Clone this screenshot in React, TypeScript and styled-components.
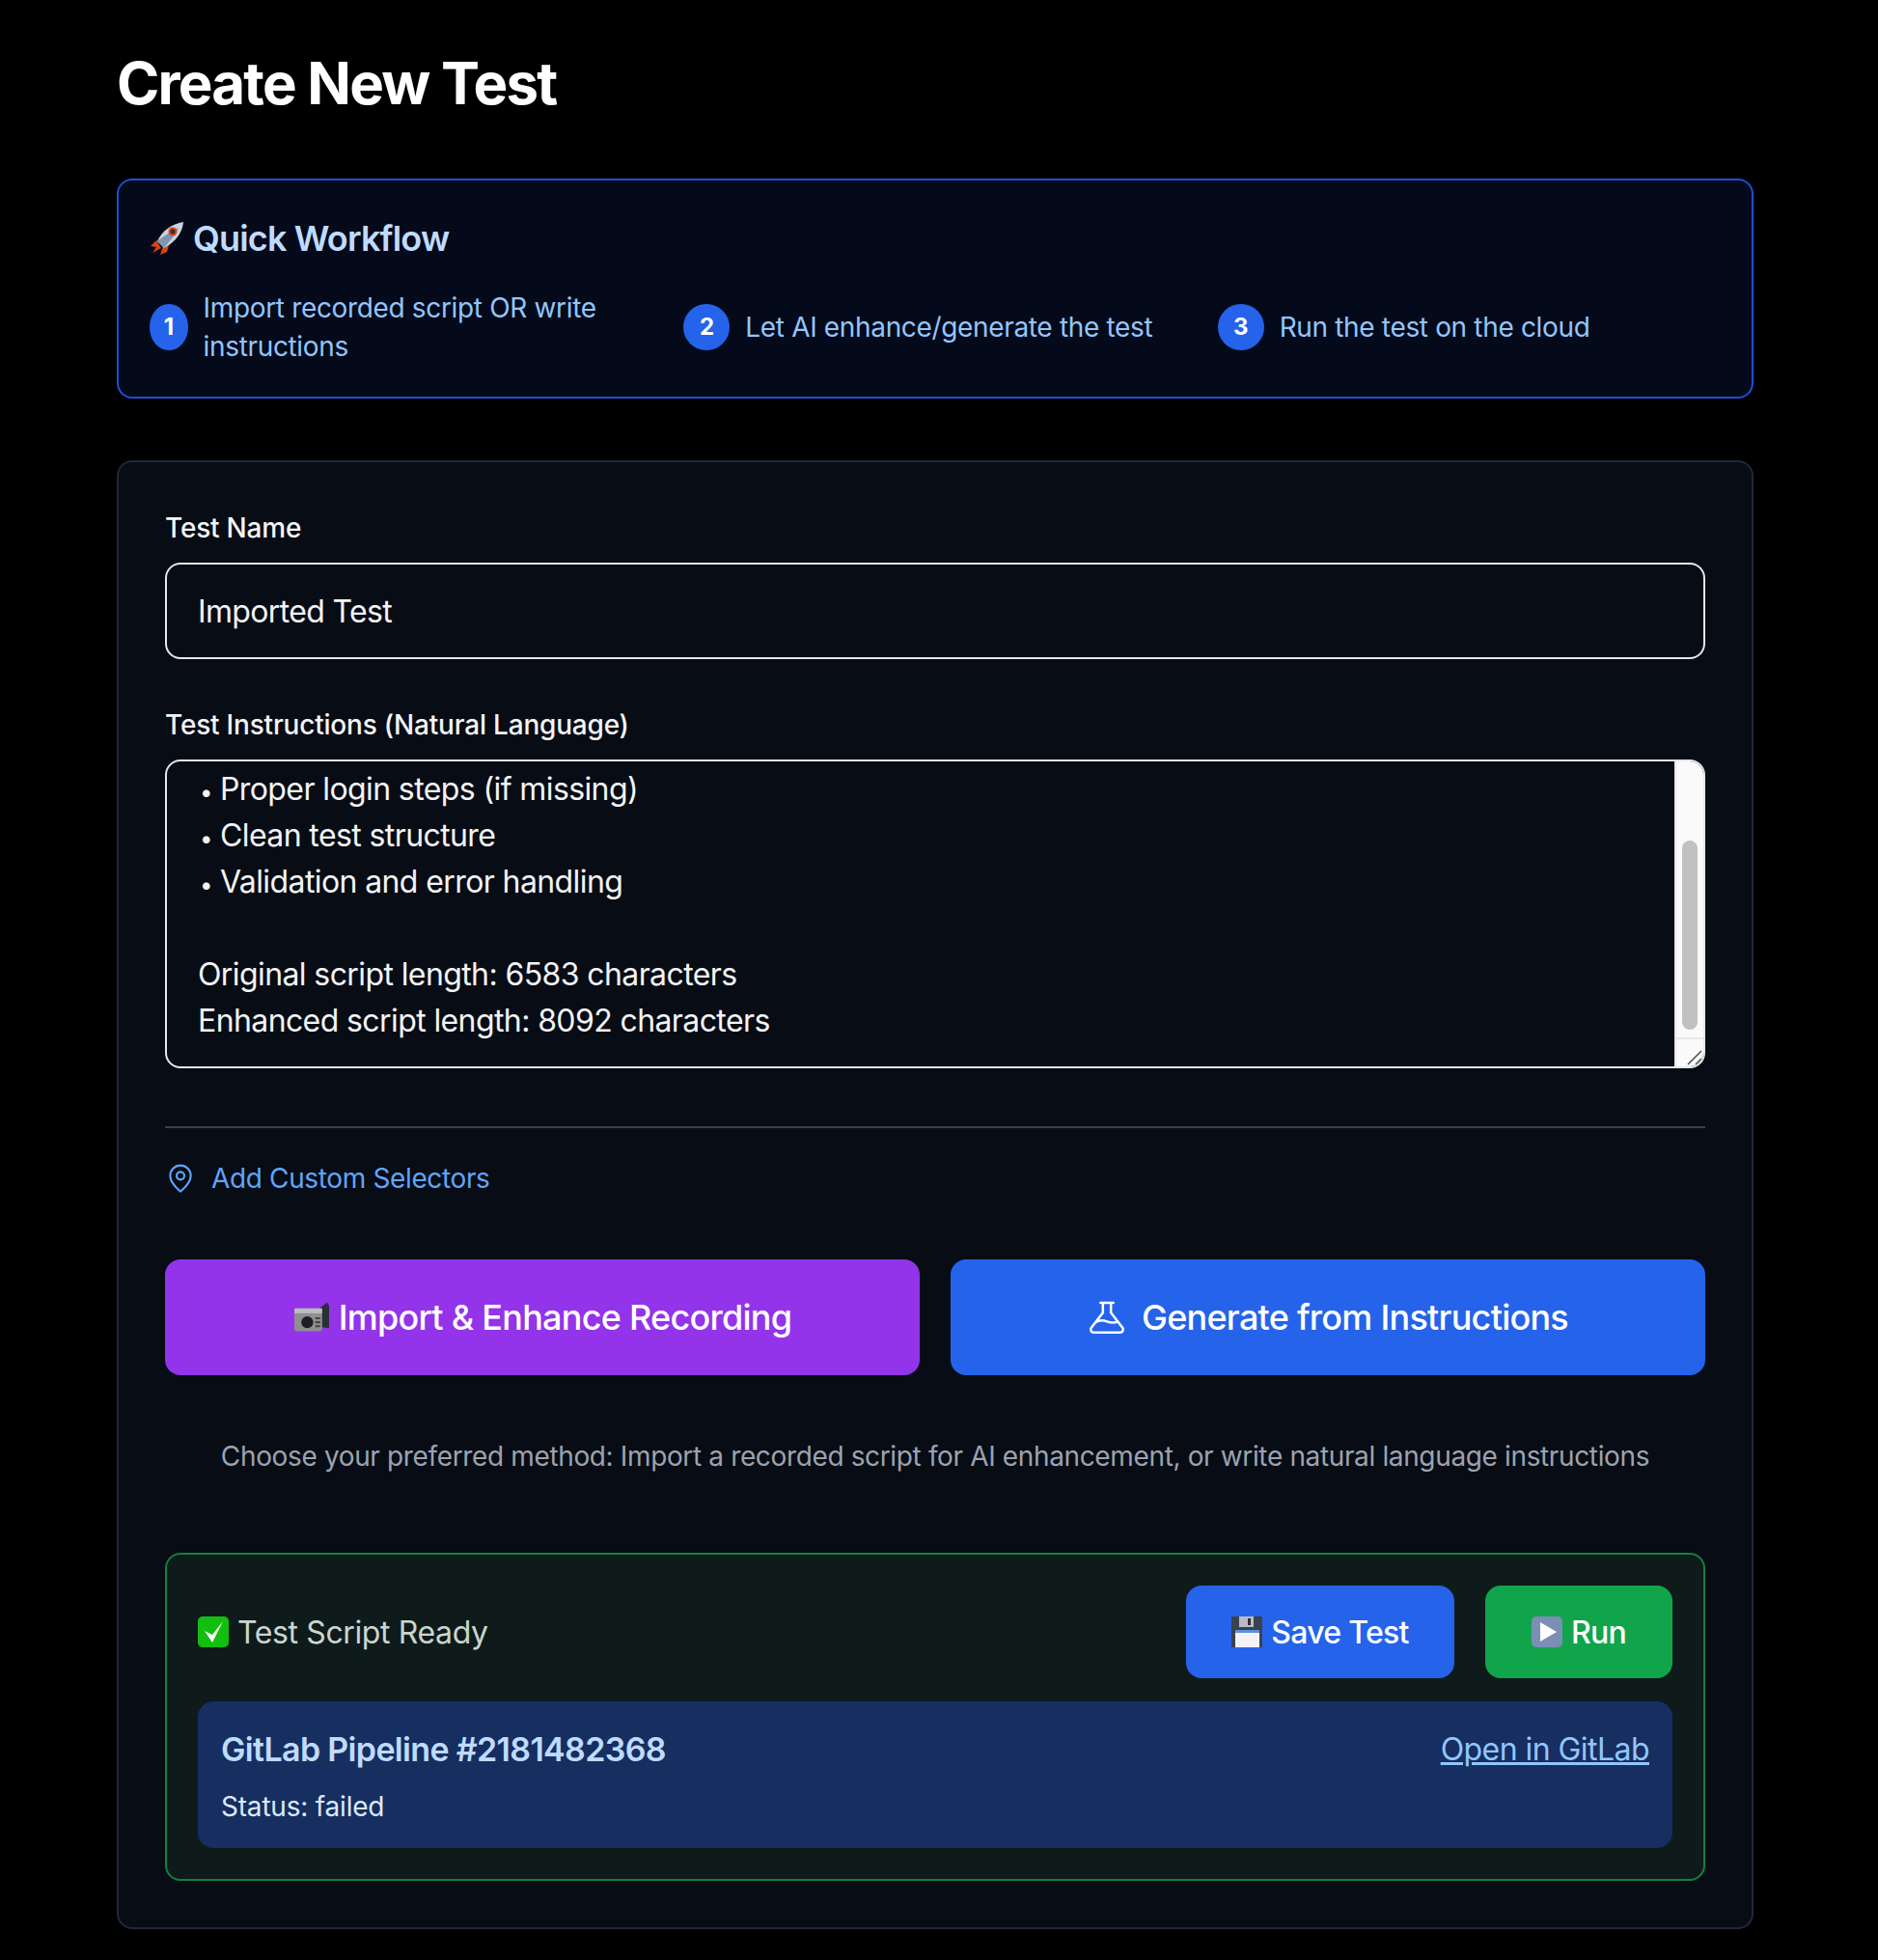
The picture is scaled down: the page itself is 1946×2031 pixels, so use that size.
import styled, { createGlobalStyle } from "styled-components";
import { MapPin } from "lucide-react";

const GlobalStyle = createGlobalStyle`
  html, body {
    margin: 0;
    background: #000;
    color: #fff;
    font-family: "Inter", "Liberation Sans", sans-serif;
  }
  * {
    box-sizing: border-box;
  }
`;

const Page = styled.main`
  width: 1946px;
  min-height: 2031px;
  padding: 50px 129px 33px 121px;
`;

const Title = styled.h1`
  margin: 0 0 63px;
  font-size: 60px;
  line-height: 72px;
  font-weight: 700;
  letter-spacing: -1.8px;
  color: #fff;
`;

const WorkflowCard = styled.section`
  border: 2px solid #1d4ed8;
  border-radius: 16px;
  background: #040a1a;
  padding: 32px;
  margin-bottom: 64px;
`;

const WorkflowTitle = styled.h2`
  display: flex;
  align-items: center;
  gap: 9px;
  margin: 0 0 24px;
  font-size: 36px;
  line-height: 56px;
  font-weight: 600;
  letter-spacing: -0.84px;
  color: #bfdbfe;
`;

const Steps = styled.div`
  display: grid;
  grid-template-columns: repeat(3, 1fr);
  gap: 32px;
`;

const Step = styled.div`
  display: flex;
  align-items: center;
  gap: 16px;
  font-size: 28px;
  line-height: 40px;
  letter-spacing: -0.34px;
  color: #93c5fd;
`;

const StepNumber = styled.span`
  display: flex;
  align-items: center;
  justify-content: center;
  width: 48px;
  height: 48px;
  border-radius: 50%;
  background: #2563eb;
  color: #fff;
  font-size: 24px;
  font-weight: 700;
`;

const FormCard = styled.section`
  border: 2px solid #1f2937;
  border-radius: 16px;
  background: #070c15;
  padding: 48px;
`;

const Label = styled.label`
  display: block;
  margin-bottom: 16px;
  font-size: 28px;
  line-height: 40px;
  font-weight: 500;
  letter-spacing: -0.2px;
  color: #f3f4f6;
`;

const NameInput = styled.input`
  display: block;
  width: 100%;
  height: 100px;
  margin-bottom: 48px;
  padding: 0 32px;
  border: 2px solid #e5e7eb;
  border-radius: 16px;
  background: #070c15;
  color: #f3f4f6;
  font: 400 32px "Inter", sans-serif;
  letter-spacing: -0.65px;
  outline: none;
`;

const TextBox = styled.div`
  position: relative;
  height: 320px;
  padding: 5px 32px 0;
  border: 2px solid #e5e7eb;
  border-radius: 16px;
  background: #070c15;
  overflow: hidden;
  font-size: 32px;
  line-height: 48px;
  letter-spacing: -0.6px;
  color: #f3f4f6;
`;

const TextLine = styled.div`
  height: 48px;
  white-space: pre;
`;

const Bullet = styled.span`
  display: inline-block;
  width: 23px;
  padding-left: 2px;
  font-size: 24px;
  line-height: 24px;
`;

const ScrollTrack = styled.div`
  position: absolute;
  top: 0;
  right: 0;
  bottom: 0;
  width: 30px;
  background: #fafafa;
  border-left: 2px solid #e8e8e8;
`;

const ScrollThumb = styled.div`
  position: absolute;
  top: 82px;
  left: 6px;
  width: 16px;
  height: 196px;
  border-radius: 8px;
  background: #c1c1c1;
`;

const ResizeCorner = styled.div`
  position: absolute;
  left: 0;
  right: 0;
  bottom: 0;
  height: 30px;
  border-top: 2px solid #e8e8e8;
`;

const ResizeGrip = styled.svg`
  position: absolute;
  right: 0;
  bottom: 0;
`;

const Divider = styled.hr`
  margin: 60px 0 0;
  border: 0;
  border-top: 2px solid #374151;
`;

const SelectorsToggle = styled.button`
  display: flex;
  align-items: center;
  gap: 16px;
  margin: 32px 0 64px;
  padding: 0;
  height: 40px;
  border: 0;
  background: none;
  color: #60a5fa;
  font: 400 28px/40px "Inter", sans-serif;
  letter-spacing: -0.36px;
`;

const ActionGrid = styled.div`
  display: grid;
  grid-template-columns: 1fr 1fr;
  gap: 32px;
`;

const ActionButton = styled.button<{ $bg: string }>`
  display: flex;
  align-items: center;
  justify-content: center;
  height: 120px;
  padding: 0;
  border: 0;
  border-radius: 16px;
  background: ${p => p.$bg};
  color: #fff;
  font: 500 36px "Inter", sans-serif;
  letter-spacing: -0.75px;
`;

const Hint = styled.p`
  margin: 64px 0 80px;
  text-align: center;
  font-size: 28px;
  line-height: 40px;
  letter-spacing: -0.36px;
  color: #9ca3af;
`;

const ResultCard = styled.section`
  border: 2px solid #15803d;
  border-radius: 16px;
  background: #0f1a1a;
  padding: 32px;
`;

const ResultHeader = styled.div`
  display: flex;
  align-items: center;
  justify-content: space-between;
  margin-bottom: 24px;
`;

const ResultStatus = styled.div`
  display: flex;
  align-items: center;
  gap: 9px;
  font-size: 32px;
  font-weight: 400;
  letter-spacing: -0.38px;
  color: #c9d6cf;
`;

const ResultActions = styled.div`
  display: flex;
  gap: 32px;
`;

const SmallButton = styled.button<{ $bg: string; $width: number }>`
  display: flex;
  align-items: center;
  justify-content: center;
  gap: 9px;
  width: ${p => p.$width}px;
  height: 96px;
  border: 0;
  border-radius: 16px;
  background: ${p => p.$bg};
  color: #fff;
  font: 500 32px "Inter", sans-serif;
  letter-spacing: -0.7px;
`;

const PipelineCard = styled.div`
  height: 152px;
  padding: 26px 24px 0;
  border-radius: 16px;
  background: #162e60;
`;

const PipelineRow = styled.div`
  display: flex;
  align-items: center;
  justify-content: space-between;
  margin-bottom: 15px;
`;

const PipelineName = styled.span`
  font-size: 34px;
  line-height: 48px;
  font-weight: 600;
  letter-spacing: -0.66px;
  color: #bfdbfe;
`;

const PipelineLink = styled.a`
  font-size: 32px;
  line-height: 48px;
  letter-spacing: -0.55px;
  color: #93c5fd;
  text-decoration: underline;
`;

const PipelineStatus = styled.div`
  font-size: 28px;
  line-height: 40px;
  letter-spacing: -0.2px;
  color: #dbeafe;
`;

const EmojiIcon = styled.svg`
  flex: none;
`;

const FlaskIcon = styled.svg`
  flex: none;
  margin-right: 16px;
`;

const CameraIcon = styled.svg`
  flex: none;
  margin-right: 10px;
`;

function RocketEmoji() {
  return (
    <EmojiIcon width="36" height="36" viewBox="0 0 36 36">
      <path d="M7 20 1 26l6 1-4 6 9-5z" fill="#d9430f" />
      <path d="m14 26-3 9 7-3 2-7z" fill="#d9430f" />
      <path d="M8 21C13 10 23 3 35 1c-1 12-9 21-20 27z" fill="#c9d3df" />
      <path d="M8 21c5-4 15-11 22-14-3 7-10 15-15 21z" fill="#7d94b4" />
      <circle cx="24" cy="11" r="4.5" fill="#d9430f" />
      <circle cx="24" cy="11" r="2.4" fill="#26334a" />
    </EmojiIcon>
  );
}

function Camera() {
  return (
    <CameraIcon width="37" height="34" viewBox="0 0 36 32">
      <path d="M24 9 34 1l2 3v23l-7-1z" fill="#2b2f38" />
      <rect x="1" y="7" width="28" height="23" rx="2" fill="#8f8f8f" />
      <rect x="1" y="7" width="28" height="5" fill="#bcbcbc" />
      <circle cx="14" cy="21" r="6" fill="#1c1f26" />
      <path d="M22 16h5v2h-5zm0 4h5v2h-5zm0 4h5v2h-5z" fill="#444" />
    </CameraIcon>
  );
}

function CheckEmoji() {
  return (
    <EmojiIcon width="32" height="32" viewBox="0 0 32 32">
      <rect width="32" height="32" rx="5" fill="#12bf10" />
      <path d="m7 15 8 12L26 5 15 19z" fill="#fff" />
    </EmojiIcon>
  );
}

function FloppyEmoji() {
  return (
    <EmojiIcon width="32" height="32" viewBox="0 0 32 32">
      <rect width="32" height="32" rx="1" fill="#3b414d" />
      <rect x="8" y="0" width="15" height="11" fill="#b9bcc2" />
      <rect x="17" y="2" width="3" height="7" fill="#2c2f36" />
      <rect x="4" y="14" width="25" height="18" fill="#f1f3f7" />
      <rect x="4" y="14" width="25" height="3" fill="#5b8fe0" />
    </EmojiIcon>
  );
}

function PlayEmoji() {
  return (
    <EmojiIcon width="32" height="32" viewBox="0 0 32 32">
      <rect width="32" height="32" rx="5" fill="#7a8fb3" />
      <path d="M9 6v20l17-10z" fill="#fff" />
    </EmojiIcon>
  );
}

const bulletLines = [
  "Proper login steps (if missing)",
  "Clean test structure",
  "Validation and error handling",
];

export default function App() {
  return (
    <Page>
      <GlobalStyle />
      <Title>Create New Test</Title>

      <WorkflowCard>
        <WorkflowTitle>
          <RocketEmoji />
          Quick Workflow
        </WorkflowTitle>
        <Steps>
          <Step>
            <StepNumber>1</StepNumber>
            <span>Import recorded script OR write instructions</span>
          </Step>
          <Step>
            <StepNumber>2</StepNumber>
            <span>Let AI enhance/generate the test</span>
          </Step>
          <Step>
            <StepNumber>3</StepNumber>
            <span>Run the test on the cloud</span>
          </Step>
        </Steps>
      </WorkflowCard>

      <FormCard>
        <Label>Test Name</Label>
        <NameInput defaultValue="Imported Test" />

        <Label>Test Instructions (Natural Language)</Label>
        <TextBox>
          {bulletLines.map(line => (
            <TextLine key={line}>
              <Bullet>•</Bullet>
              {line}
            </TextLine>
          ))}
          <TextLine />
          <TextLine>Original script length: 6583 characters</TextLine>
          <TextLine>Enhanced script length: 8092 characters</TextLine>
          <ScrollTrack>
            <ScrollThumb />
            <ResizeCorner />
            <ResizeGrip width="20" height="20" viewBox="0 0 20 20">
              <path d="M4 18 18 4M12 18l6-6" stroke="#555" strokeWidth="1.6" />
            </ResizeGrip>
          </ScrollTrack>
        </TextBox>

        <Divider />
        <SelectorsToggle>
          <MapPin size={32} strokeWidth={1.6} />
          Add Custom Selectors
        </SelectorsToggle>

        <ActionGrid>
          <ActionButton $bg="#9333ea">
            <Camera />
            Import &amp; Enhance Recording
          </ActionButton>
          <ActionButton $bg="#2563eb">
            <FlaskIcon
              width="40"
              height="40"
              viewBox="0 0 24 24"
              fill="none"
              stroke="#fff"
              strokeWidth="1.5"
              strokeLinecap="round"
              strokeLinejoin="round"
            >
              <path d="M8 3h8M9.5 3v6.2L2.2 18.6c-.8 1.2 0 2.8 1.6 2.8h16.4c1.6 0 2.4-1.6 1.6-2.8L14.5 9.2V3" />
              <path d="M5.2 15c2.4-1.6 4.6-1.3 6.8-.4 2.2.9 4.4 1 6.8.2" />
            </FlaskIcon>
            Generate from Instructions
          </ActionButton>
        </ActionGrid>

        <Hint>
          Choose your preferred method: Import a recorded script for AI
          enhancement, or write natural language instructions
        </Hint>

        <ResultCard>
          <ResultHeader>
            <ResultStatus>
              <CheckEmoji />
              Test Script Ready
            </ResultStatus>
            <ResultActions>
              <SmallButton $bg="#2563eb" $width={278}>
                <FloppyEmoji />
                Save Test
              </SmallButton>
              <SmallButton $bg="#11a54b" $width={194}>
                <PlayEmoji />
                Run
              </SmallButton>
            </ResultActions>
          </ResultHeader>
          <PipelineCard>
            <PipelineRow>
              <PipelineName>GitLab Pipeline #2181482368</PipelineName>
              <PipelineLink href="#">Open in GitLab</PipelineLink>
            </PipelineRow>
            <PipelineStatus>Status: failed</PipelineStatus>
          </PipelineCard>
        </ResultCard>
      </FormCard>
    </Page>
  );
}
